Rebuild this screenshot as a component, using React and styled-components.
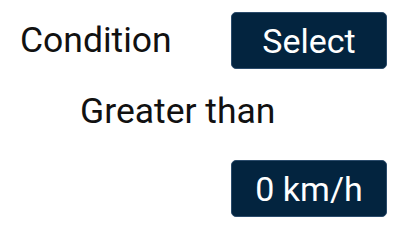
import React from "react";
import styled, { createGlobalStyle } from "styled-components";

const Global = createGlobalStyle`
  html, body { margin: 0; padding: 0; background: #ffffff; }
  body { font-family: Roboto, "Noto Sans", Arial, sans-serif; }
`;

const Form = styled.div`
  display: flex;
  flex-direction: column;
  padding: 12px 0 0 20px;
`;

const Row = styled.div`
  display: grid;
  grid-template-columns: 211px 156px;
  align-items: center;
  height: 57px;
  margin-top: ${(p) => p.$gap || 0}px;
`;

const Label = styled.span`
  font-size: 35.5px;
  color: #111;
  line-height: 57px;
  padding-left: ${(p) => p.$indent || 0}px;
  white-space: nowrap;
`;

const ValueButton = styled.button`
  grid-column: 2;
  height: 57px;
  width: 156px;
  box-sizing: border-box;
  border: 1px solid #2b4b6b;
  border-radius: 5px;
  background: #03243f;
  color: #ffffff;
  font-family: Roboto, "Noto Sans", Arial, sans-serif;
  font-size: 34px;
  padding: 0;
  display: flex;
  align-items: center;
  justify-content: center;
`;

export default function App() {
  return (
    <>
      <Global />
      <Form>
        <Row>
          <Label>Condition</Label>
          <ValueButton>Select</ValueButton>
        </Row>
        <Row $gap={14}>
          <Label $indent={60}>Greater than</Label>
        </Row>
        <Row $gap={20}>
          <ValueButton>0 km/h</ValueButton>
        </Row>
      </Form>
    </>
  );
}
